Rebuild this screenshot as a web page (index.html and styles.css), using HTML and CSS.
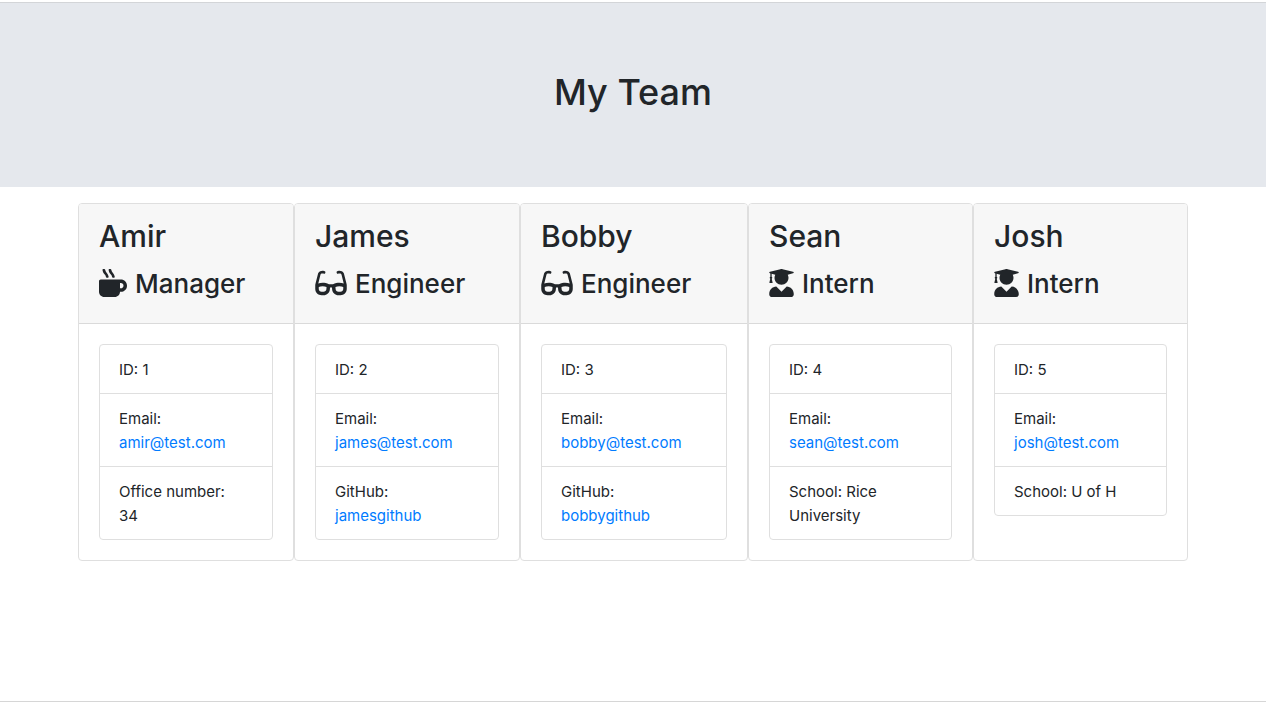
FILE: index.html
```html
<!DOCTYPE html>
<html lang="en">
<head>
<meta charset="utf-8">
<meta name="viewport" content="width=device-width, initial-scale=1">
<title>My Team</title>
<link rel="stylesheet" href="styles.css">
</head>
<body>
<svg class="sprite" aria-hidden="true">
  <symbol id="mug" viewBox="0 0 512 512"><path d="M127.1 146.5c1.3 7.7 8 13.5 16 13.5h16.5c9.8 0 17.6-8.5 16.3-18-3.8-28.2-16.4-54.2-36.6-74.7-14.4-14.7-23.6-33.3-26.4-53.5C111.8 5.9 105 0 96.8 0H80.4C70.6 0 63 8.5 64.1 18c3.9 31.9 18 61.3 40.6 84.4 12 12.2 19.7 27.5 22.4 44.1zm112 0c1.3 7.7 8 13.5 16 13.5h16.5c9.8 0 17.6-8.5 16.3-18-3.8-28.2-16.4-54.2-36.6-74.7-14.4-14.7-23.6-33.3-26.4-53.5C223.8 5.9 217 0 208.8 0h-16.4c-9.8 0-17.5 8.5-16.3 18 3.9 31.9 18 61.3 40.6 84.4 12 12.2 19.7 27.5 22.4 44.1zM400 192H32c-17.7 0-32 14.3-32 32v192c0 53 43 96 96 96h192c53 0 96-43 96-96h16c61.8 0 112-50.2 112-112s-50.2-112-112-112zm0 160h-16v-96h16c26.5 0 48 21.5 48 48s-21.5 48-48 48z"/></symbol>
  <symbol id="glasses" viewBox="0 0 576 512"><path d="M574.1 280.37L528.75 98.66c-5.91-23.7-21.59-44.05-43-55.81-21.44-11.73-46.97-14.11-70.19-6.33l-15.25 5.08c-8.39 2.79-12.92 11.86-10.12 20.24l5.06 15.18c2.79 8.38 11.85 12.91 20.23 10.12l13.18-4.39c10.87-3.62 23-3.57 33.16 1.73 10.29 5.37 17.57 14.56 20.37 25.82l38.46 153.82c-22.19-6.81-49.79-12.46-81.2-12.46-34.77 0-73.98 7.02-114.85 26.74h-73.18c-40.87-19.74-80.08-26.75-114.86-26.75-31.42 0-59.02 5.65-81.21 12.46l38.46-153.83c2.79-11.25 10.09-20.45 20.38-25.81 10.16-5.3 22.28-5.35 33.15-1.73l13.17 4.39c8.38 2.79 17.44-1.74 20.23-10.12l5.06-15.18c2.8-8.38-1.73-17.45-10.12-20.24l-15.25-5.08c-23.22-7.78-48.75-5.41-70.19 6.33-21.41 11.77-37.09 32.11-43 55.8L1.9 280.37A64.218 64.218 0 0 0 0 295.86v70.25C0 429.01 51.58 480 115.2 480h37.12c60.28 0 110.37-45.94 114.88-105.37l2.93-38.63h35.75l2.93 38.63C313.31 434.06 363.4 480 423.68 480h37.12c63.62 0 115.2-50.99 115.2-113.88v-70.25c0-5.23-.64-10.43-1.9-15.5zm-370.72 89.42c-1.97 25.91-24.4 46.21-51.06 46.21H115.2C86.97 416 64 393.62 64 366.11v-37.54c18.12-6.49 43.42-12.92 72.58-12.92 23.86 0 47.26 4.33 69.93 12.92l-3.13 41.22zM512 366.12c0 27.51-22.97 49.88-51.2 49.88h-37.12c-26.67 0-49.1-20.3-51.06-46.21l-3.13-41.22c22.67-8.59 46.08-12.92 69.95-12.92 29.12 0 54.43 6.44 72.55 12.93v37.54z"/></symbol>
  <symbol id="graduate" viewBox="0 0 448 512"><path d="M319.4 320.6L224 416l-95.4-95.4C57.1 323.7 0 382.2 0 454.4v9.6c0 26.5 21.5 48 48 48h352c26.5 0 48-21.5 48-48v-9.6c0-72.2-57.1-130.7-128.6-133.8zM13.6 79.8l6.4 1.5v58.4c-7 4.2-12 11.5-12 20.3 0 8.4 4.6 15.4 11.1 19.7L3.5 242c-1.7 6.9 2.1 14 7.6 14h41.8c5.5 0 9.3-7.1 7.6-14l-15.6-62.3C51.4 175.4 56 168.4 56 160c0-8.8-5-16.1-12-20.3V87.1l66 15.9c-8.6 17.2-14 36.4-14 57 0 70.7 57.3 128 128 128s128-57.3 128-128c0-20.6-5.3-39.8-14-57l96.3-23.2c18.2-4.4 18.2-27.1 0-31.5l-190.4-46c-13-3.1-26.7-3.1-39.7 0L13.6 48.2c-18.1 4.4-18.1 27.2 0 31.6z"/></symbol>
</svg>
<header class="banner"><h1>My Team</h1></header>
<main class="team">
  <article class="card">
    <div class="card-header"><h2>Amir</h2><h3><svg class="icon" aria-hidden="true"><use href="#mug"/></svg>Manager</h3></div>
    <ul class="details">
      <li>ID: 1</li>
      <li>Email: <a href="mailto:amir@test.com">amir@test.com</a></li>
      <li>Office number: <span class="value">34</span></li>
    </ul>
  </article>
  <article class="card">
    <div class="card-header"><h2>James</h2><h3><svg class="icon icon-wide" aria-hidden="true"><use href="#glasses"/></svg>Engineer</h3></div>
    <ul class="details">
      <li>ID: 2</li>
      <li>Email: <a href="mailto:james@test.com">james@test.com</a></li>
      <li>GitHub: <a href="https://github.com/jamesgithub">jamesgithub</a></li>
    </ul>
  </article>
  <article class="card">
    <div class="card-header"><h2>Bobby</h2><h3><svg class="icon icon-wide" aria-hidden="true"><use href="#glasses"/></svg>Engineer</h3></div>
    <ul class="details">
      <li>ID: 3</li>
      <li>Email: <a href="mailto:bobby@test.com">bobby@test.com</a></li>
      <li>GitHub: <a href="https://github.com/bobbygithub">bobbygithub</a></li>
    </ul>
  </article>
  <article class="card">
    <div class="card-header"><h2>Sean</h2><h3><svg class="icon icon-narrow" aria-hidden="true"><use href="#graduate"/></svg>Intern</h3></div>
    <ul class="details">
      <li>ID: 4</li>
      <li>Email: <a href="mailto:sean@test.com">sean@test.com</a></li>
      <li>School: Rice University</li>
    </ul>
  </article>
  <article class="card">
    <div class="card-header"><h2>Josh</h2><h3><svg class="icon icon-narrow" aria-hidden="true"><use href="#graduate"/></svg>Intern</h3></div>
    <ul class="details">
      <li>ID: 5</li>
      <li>Email: <a href="mailto:josh@test.com">josh@test.com</a></li>
      <li>School: U of H</li>
    </ul>
  </article>
</main>
</body>
</html>
```
FILE: styles.css
```css
* { box-sizing: border-box; }
body {
  display: flex;
  flex-direction: column;
  min-height: 100vh;
  margin: 0;
  padding: 2px 0 4px;
  background: #fff;
  color: #212529;
  font: 400 15px/24px Inter, "Liberation Sans", sans-serif;
}
h1, h2, h3 { margin: 0; font-weight: 500; }
.sprite { position: absolute; width: 0; height: 0; }
.banner {
  padding: 65px 16px 71px;
  border-top: 1px solid #d3d5d8;
  background: #e5e8ed;
  text-align: center;
}
.banner h1 { font-size: 36px; line-height: 48px; }
.team {
  flex: 1;
  display: grid;
  grid-template-columns: 216fr 226fr 228fr 225fr 215fr;
  align-items: start;
  align-content: start;
  padding: 16px max(16px, calc((100% - 1110px) / 2));
  border-bottom: 1px solid #d6d6d6;
}
.card {
  height: 100%;
  border: 1px solid #dfdfdf;
  border-radius: 4px;
  overflow: hidden;
}
.card-header {
  padding: 12px 20px 22px;
  border-bottom: 1px solid #dadada;
  background: #f7f7f7;
}
.card-header h2 { font-size: 30px; line-height: 40px; }
.card-header h3 {
  display: flex;
  align-items: center;
  gap: 8px;
  margin-top: 10px;
  font-size: 26px;
  line-height: 35px;
}
.icon { flex: none; width: 28px; height: 28px; margin-bottom: 2px; fill: currentColor; }
.icon-wide { width: 32px; }
.icon-narrow { width: 25px; }
.details {
  margin: 20px;
  padding: 0;
  border: 1px solid #dfdfdf;
  border-radius: 4px;
  list-style: none;
}
.details li { padding: 13px 19px 11px; }
.details li + li { border-top: 1px solid #dfdfdf; }
.details a, .value { display: block; }
.details a { color: #007bff; text-decoration: none; }
```
